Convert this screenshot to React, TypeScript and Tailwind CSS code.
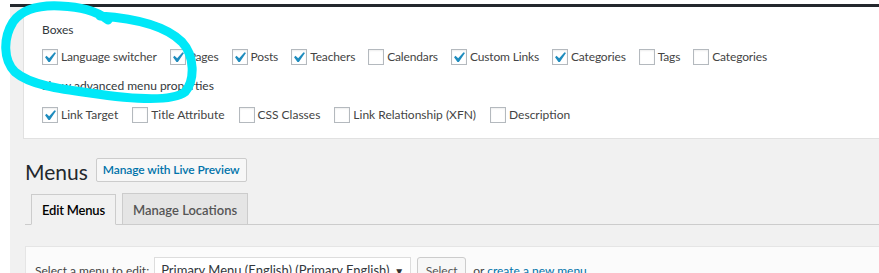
import React from 'react';

const font = { fontFamily: 'Lato, "Noto Sans", sans-serif' };

function CheckBox({ checked }: { checked: boolean }) {
    return (
        <span className="relative inline-block w-4 h-4 shrink-0 border border-[#b4b9be] bg-white shadow-[inset_0_1px_2px_rgba(0,0,0,0.07)]">
            {checked && (
                <svg className="absolute -left-[4px] -top-[3px] w-[21px] h-[21px]" viewBox="0 0 20 20">
                    <path d="M14.83 4.89l1.34.94-5.81 8.38H9.02L5.78 9.67l1.34-1.25 2.57 2.4z" fill="#1e8cbe" />
                </svg>
            )}
        </span>
    );
}

function Option({ label, checked, tight }: { label: string; checked: boolean; tight?: boolean }) {
    return (
        <label className={tight ? 'flex items-center mr-[13px]' : 'flex items-center mr-[14px]'}>
            <CheckBox checked={checked} />
            <span className={tight ? 'ml-[3px] text-[12px] text-[#444] whitespace-nowrap tracking-[-0.15px]' : 'ml-[3px] text-[12px] text-[#444] whitespace-nowrap'}>
                {label}
            </span>
        </label>
    );
}

const boxes = [
    { label: 'Language switcher', checked: true },
    { label: 'Pages', checked: true },
    { label: 'Posts', checked: true },
    { label: 'Teachers', checked: true },
    { label: 'Calendars', checked: false },
    { label: 'Custom Links', checked: true },
    { label: 'Categories', checked: true },
    { label: 'Tags', checked: false },
    { label: 'Categories', checked: false },
];

const advanced = [
    { label: 'Link Target', checked: true },
    { label: 'Title Attribute', checked: false },
    { label: 'CSS Classes', checked: false },
    { label: 'Link Relationship (XFN)', checked: false },
    { label: 'Description', checked: false },
];

export default function App() {
    return (
        <div className="relative w-[879px] h-[273px] overflow-hidden bg-white pl-[10px] pt-[4px]" style={font}>
            <div className="h-full bg-[#f1f1f1]">
                {/* admin bar edge */}
                <div className="h-[3px] bg-[#23282d]" />

                {/* Screen options panel */}
                <div className="ml-[13px] bg-white border-l border-b border-[#e1e1e1] pl-[18px] pt-[13px] pb-[13px]">
                    <div className="h-5 flex items-center text-[12px] text-[#32373c]">Boxes</div>
                    <div className="h-5 mt-[7px] flex items-center">
                        {boxes.map((b, i) => (
                            <Option key={i} label={b.label} checked={b.checked} tight />
                        ))}
                    </div>
                    <div className="h-5 mt-[9px] flex items-center text-[12px] text-[#32373c]">Show advanced menu properties</div>
                    <div className="h-5 mt-[9px] flex items-center">
                        {advanced.map((b, i) => (
                            <Option key={i} label={b.label} checked={b.checked} />
                        ))}
                    </div>
                </div>

                {/* Page content */}
                <div className="ml-[15px]">
                    <div className="flex items-center mt-[19px] h-6">
                        <h1 className="text-[21px] text-[#23282d] leading-none pt-[2px]">Menus</h1>
                        <span className="ml-[8px] h-6 flex items-center px-[6px] border border-[#ccc] rounded-[2px] bg-[#f7f7f7] text-[12px] font-semibold text-[#0073aa] tracking-[-0.1px]">
                            Manage with Live Preview
                        </span>
                    </div>

                    {/* Tabs */}
                    <div className="mt-[11px] flex items-end pl-[6px] border-b border-[#ccc] h-[32px]">
                        <div className="h-[31px] -mb-px flex items-center pt-[3px] px-[10px] border border-[#ccc] border-b-[#f1f1f1] bg-[#f1f1f1] text-[13px] font-semibold text-[#000] tracking-[-0.2px]">
                            Edit Menus
                        </div>
                        <div className="h-[31px] ml-[6px] flex items-center pt-[3px] px-[10px] border border-b-0 border-[#ccc] bg-[#e5e5e5] text-[13px] font-semibold text-[#555]">
                            Manage Locations
                        </div>
                    </div>

                    {/* Manage menus bar */}
                    <div className="mt-[21px] border border-r-0 border-[#e5e5e5] bg-[#fbfbfb] pl-[9px] pt-[10px] h-[60px] flex items-start">
                        <span className="mt-[5px] text-[12px] text-[#444] whitespace-nowrap">Select a menu to edit:</span>
                        <div className="ml-[5px] w-[257px] h-[28px] border border-[#ddd] bg-white flex items-center justify-between pl-[6px] pr-[6px] text-[13px] text-[#32373c]">
                            <span className="whitespace-nowrap">Primary Menu (English) (Primary English)</span>
                            <span className="text-[10px] text-[#333]">▼</span>
                        </div>
                        <span className="ml-[6px] w-[49px] h-[28px] flex items-center justify-center border border-[#ccc] rounded-[3px] bg-[#f7f7f7] shadow-[0_1px_0_#ccc] text-[12px] text-[#555]">
                            Select
                        </span>
                        <span className="ml-[7px] mt-[5px] text-[12px] text-[#444] whitespace-nowrap">
                            or <span className="text-[#0073aa] underline">create a new menu</span>
                        </span>
                    </div>
                </div>
            </div>

            {/* hand-drawn highlight */}
            <svg className="absolute inset-0 pointer-events-none" width="879" height="273" viewBox="0 0 879 273">
                <path
                    d="M100 16 C130 18, 164 24, 182 42 C195 56, 195 80, 185 92 C172 102, 130 99, 90 93 C60 89, 30 85, 15 72 C3 60, 3 38, 13 22 C23 8, 40 5, 60 6 C80 7, 95 10, 108 20"
                    fill="none"
                    stroke="#00e8f8"
                    strokeWidth="9"
                    strokeLinecap="round"
                />
            </svg>
        </div>
    );
}
